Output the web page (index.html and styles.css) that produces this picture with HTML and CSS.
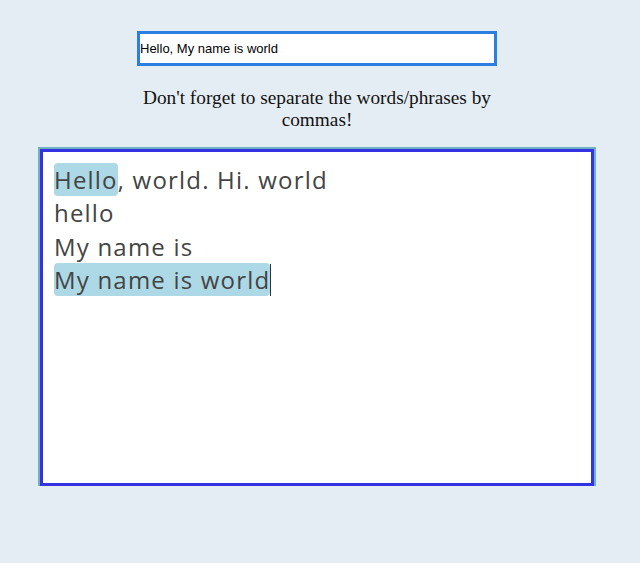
FILE: index.html
```html
<!DOCTYPE html>
<html>
<head>
<meta charset="utf-8">
<link rel="stylesheet" href="styles.css">
</head>
<body>
<main class="page">
  <div class="field">Hello, My name is world</div>
  <p class="hint">Don't forget to separate the words/phrases by commas!</p>
  <div class="editor">
    <div class="line"><mark class="hl">Hello</mark>, world. Hi. world</div>
    <div class="line">hello</div>
    <div class="line">My name is</div>
    <div class="line"><mark class="hl">My name is world</mark><span class="caret"></span></div>
  </div>
</main>
</body>
</html>
```

FILE: styles.css
```css
html, body {
  margin: 0;
  padding: 0;
  background: #e5edf4;
}
.page {
  width: 634px;
  display: flex;
  flex-direction: column;
  align-items: center;
  padding-top: 31px;
}
.field {
  box-sizing: border-box;
  width: 360px;
  height: 35px;
  border: 3px solid #2b7fe0;
  background: #fff;
  font-family: "Liberation Sans", Arial, sans-serif;
  font-size: 13px;
  color: #000;
  padding: 0 1px 0 0;
  line-height: 29px;
}
.hint {
  margin: 21px 0 0;
  width: 370px;
  text-align: center;
  font-family: "Liberation Serif", "Times New Roman", serif;
  font-size: 19.3px;
  line-height: 22px;
  color: #111;
}
.editor {
  box-sizing: border-box;
  margin-top: 18px;
  width: 554px;
  height: 337px;
  border: 3px solid #3532e2;
  box-shadow: 0 0 0 2px #6db2c3;
  background: #fff;
  padding: 11px 11px;
  font-family: "Open Sans", sans-serif;
  font-size: 24px;
  line-height: 33.3px;
  letter-spacing: 1.2px;
  color: #444;
}
.line {
  white-space: pre;
}
.hl {
  background: #add8e6;
  color: #444;
  border-radius: 4px;
}
.caret {
  display: inline-block;
  width: 1px;
  height: 32px;
  background: #333;
  vertical-align: -7px;
}
```
